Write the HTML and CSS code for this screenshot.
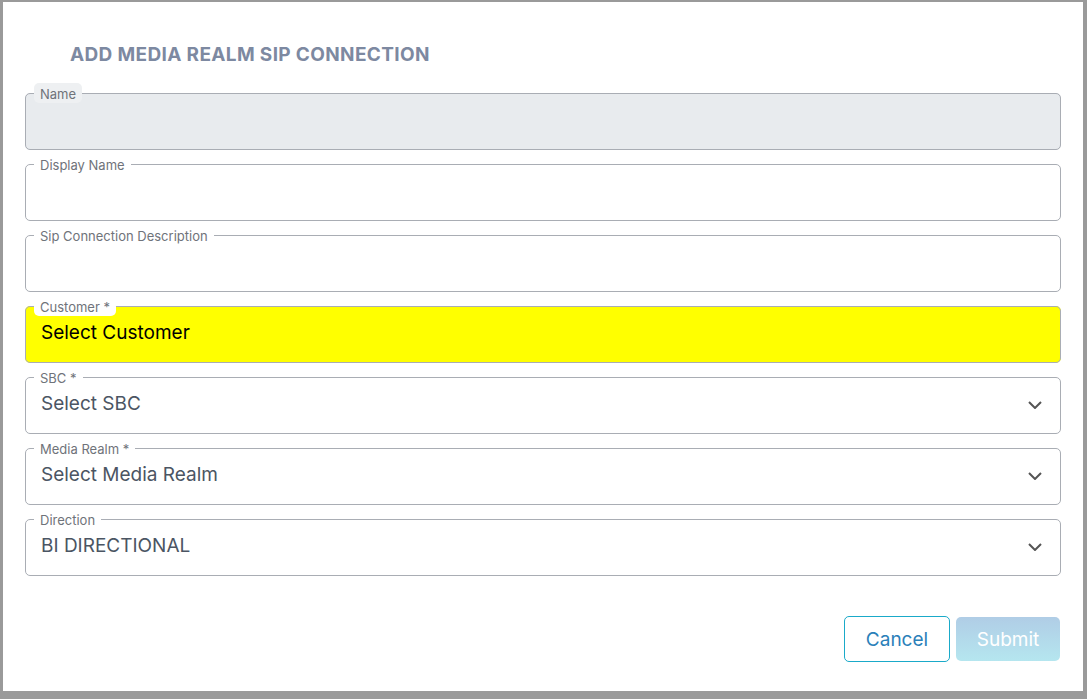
FILE: index.html
```html
<!DOCTYPE html>
<html lang="en">
<head>
    <meta charset="UTF-8">
    <meta name="viewport" content="width=device-width, initial-scale=1.0">
    <title>Add Media Realm SIP Connection</title>
    <link rel="stylesheet" href="styles.css">
</head>
<body>
    <div class="modal">
        <h2 class="modal-title">ADD MEDIA REALM SIP CONNECTION</h2>
        <form class="form">
            <fieldset class="field field-disabled">
                <legend>Name</legend>
                <input class="field-input" type="text" disabled>
            </fieldset>
            <fieldset class="field">
                <legend>Display Name</legend>
                <input class="field-input" type="text">
            </fieldset>
            <fieldset class="field">
                <legend>Sip Connection Description</legend>
                <input class="field-input" type="text">
            </fieldset>
            <fieldset class="field field-highlight">
                <legend>Customer *</legend>
                <div class="select-box">
                    <span class="select-value">Select Customer</span>
                </div>
            </fieldset>
            <fieldset class="field">
                <legend>SBC *</legend>
                <div class="select-box">
                    <span class="select-value">Select SBC</span>
                    <svg class="chevron" width="14" height="8" viewBox="0 0 14 8"><path d="M1 1l6 6 6-6" fill="none" stroke="#555" stroke-width="2"/></svg>
                </div>
            </fieldset>
            <fieldset class="field">
                <legend>Media Realm *</legend>
                <div class="select-box">
                    <span class="select-value">Select Media Realm</span>
                    <svg class="chevron" width="14" height="8" viewBox="0 0 14 8"><path d="M1 1l6 6 6-6" fill="none" stroke="#555" stroke-width="2"/></svg>
                </div>
            </fieldset>
            <fieldset class="field">
                <legend>Direction</legend>
                <div class="select-box">
                    <span class="select-value">BI DIRECTIONAL</span>
                    <svg class="chevron" width="14" height="8" viewBox="0 0 14 8"><path d="M1 1l6 6 6-6" fill="none" stroke="#555" stroke-width="2"/></svg>
                </div>
            </fieldset>
            <div class="actions">
                <button type="button" class="btn btn-cancel">Cancel</button>
                <button type="button" class="btn btn-submit" disabled>Submit</button>
            </div>
        </form>
    </div>
</body>
</html>
```

FILE: styles.css
```css
body {
    margin: 0;
    background-color: #9a9a9a;
    font-family: 'Inter', 'Noto Sans', sans-serif;
    height: 699px;
    overflow: hidden;
}
.modal {
    margin: 2px 0 0 3px;
    width: 1080px;
    height: 689px;
    box-sizing: border-box;
    background: #fff;
    padding: 41px 22px 0 22px;
}
.modal-title {
    margin: 0 0 17px 45px;
    font-size: 19px;
    line-height: 23px;
    font-weight: 700;
    color: #7d89a1;
    letter-spacing: 0.35px;
}
.form {
    display: flex;
    flex-direction: column;
    gap: 4px;
}
.field {
    margin: 0;
    padding: 0 8px 14px 8px;
    border: 1px solid #a9adb4;
    border-radius: 5px;
    min-width: 0;
}
.field legend {
    font-size: 13px;
    line-height: 16px;
    color: #6f737a;
    padding: 3px 6px 1px 6px;
    border-radius: 0 0 5px 5px;
}
.field-disabled {
    background-color: #e8ebee;
}
.field-disabled legend {
    background-color: #eef0f2;
    border-radius: 5px;
}
.field-highlight {
    background-color: #ffff00;
}
.field-highlight legend {
    background-color: #fff;
}
.field-input {
    display: block;
    width: 100%;
    box-sizing: border-box;
    height: 32px;
    border: none;
    background: transparent;
    padding: 0 7px;
    font-family: inherit;
    font-size: 19px;
    outline: none;
}
.select-box {
    height: 32px;
    display: flex;
    align-items: center;
    justify-content: space-between;
    padding: 0 10px 0 7px;
}
.select-value {
    font-size: 19px;
    color: #4b5563;
}
.field-highlight .select-value {
    color: #000;
}
.chevron {
    flex: none;
    margin-top: 4px;
}
.actions {
    display: flex;
    justify-content: flex-end;
    align-items: center;
    gap: 6px;
    margin-top: 36px;
    padding-right: 1px;
}
.btn {
    font-family: inherit;
    font-size: 19px;
    border-radius: 5px;
    cursor: pointer;
}
.btn-cancel {
    width: 106px;
    height: 46px;
    background: #fff;
    border: 1px solid #1aaac9;
    color: #2a80b9;
}
.btn-submit {
    width: 104px;
    height: 44px;
    border: none;
    color: #fff;
    background: linear-gradient(#b0cde6, #b5e6ef);
}
```
